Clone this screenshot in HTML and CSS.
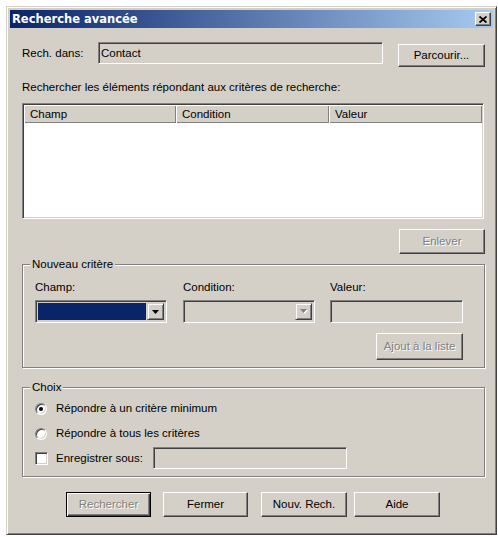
FILE: index.html
```html
<!DOCTYPE html>
<html lang="fr">
<head>
    <meta charset="UTF-8">
    <title>Recherche avancée</title>
    <link rel="stylesheet" href="styles.css">
</head>
<body>
    <div class="window">
        <div class="titlebar">
            <span class="title">Recherche avancée</span>
            <div class="close">
                <svg width="8" height="7" viewBox="0 0 8 7"><path d="M0.5 0.5L7.5 6.5M7.5 0.5L0.5 6.5" stroke="#000" stroke-width="1.8" fill="none"/></svg>
            </div>
        </div>

        <div class="content">
            <!-- Look in -->
            <div class="lookin">
                <span class="lookin-label">Rech. dans:</span>
                <div class="field lookin-field">Contact</div>
                <div class="btn browse">Parcourir...</div>
            </div>

            <div class="caption">Rechercher les éléments répondant aux critères de recherche:</div>

            <!-- Criteria list -->
            <div class="listview">
                <div class="lv-header">
                    <div class="lv-col col-field">Champ</div>
                    <div class="lv-col col-cond">Condition</div>
                    <div class="lv-col col-value">Valeur</div>
                </div>
            </div>

            <div class="remove-row">
                <div class="btn disabled remove">Enlever</div>
            </div>

            <!-- New criterion -->
            <div class="group group-new">
                <div class="group-title">Nouveau critère</div>
                <div class="criteria">
                    <div class="crit-col col1">
                        <div class="crit-label">Champ:</div>
                        <div class="field combo">
                            <div class="combo-value selected"></div>
                            <div class="combo-btn">
                                <svg width="7" height="4" viewBox="0 0 7 4"><polygon points="0,0 7,0 3.5,4" fill="#000"/></svg>
                            </div>
                        </div>
                    </div>
                    <div class="crit-col col2">
                        <div class="crit-label">Condition:</div>
                        <div class="field combo">
                            <div class="combo-value"></div>
                            <div class="combo-btn">
                                <svg width="8" height="5" viewBox="0 0 8 5"><polygon points="1,1 8,1 4.5,5" fill="#fff"/><polygon points="0,0 7,0 3.5,4" fill="#808080"/></svg>
                            </div>
                        </div>
                    </div>
                    <div class="crit-col col3">
                        <div class="crit-label">Valeur:</div>
                        <div class="field value-field"></div>
                    </div>
                </div>
                <div class="add-row">
                    <div class="btn disabled add">Ajout à la liste</div>
                </div>
            </div>

            <!-- Options -->
            <div class="group group-choice">
                <div class="group-title">Choix</div>
                <div class="option opt1">
                    <span class="radio checked"></span>
                    <span>Répondre à un critère minimum</span>
                </div>
                <div class="option opt2">
                    <span class="radio"></span>
                    <span>Répondre à tous les critères</span>
                </div>
                <div class="option opt3">
                    <span class="checkbox"></span>
                    <span class="save-label">Enregistrer sous:</span>
                    <div class="field save-field"></div>
                </div>
            </div>

            <!-- Dialog buttons -->
            <div class="actions">
                <div class="btn default disabled b-search">Rechercher</div>
                <div class="btn b-close">Fermer</div>
                <div class="btn b-new">Nouv. Rech.</div>
                <div class="btn b-help">Aide</div>
            </div>
        </div>
    </div>
</body>
</html>
```

FILE: styles.css
```css
* {
    box-sizing: border-box;
}

body {
    margin: 0;
    background: #fff;
    font-family: "Liberation Sans", Arial, sans-serif;
    font-size: 11.5px;
    line-height: 13px;
    color: #000;
}

/* Window frame */
.window {
    margin: 6px 0 0 6px;
    width: 491px;
    height: 529px;
    padding: 3px;
    background: #d4d0c8;
    border: 1px solid;
    border-color: #d4d0c8 #404040 #404040 #d4d0c8;
    box-shadow: inset 1px 1px #fff, inset -1px -1px #808080;
}

.titlebar {
    height: 18px;
    display: flex;
    align-items: center;
    justify-content: space-between;
    padding: 0 2px 0 2px;
    background: linear-gradient(to right, #0a246a, #a6caf0);
    color: #fff;
    font-family: "DejaVu Sans", sans-serif;
    font-weight: bold;
    font-size: 11.5px;
}

.close {
    width: 16px;
    height: 14px;
    display: flex;
    align-items: center;
    justify-content: center;
    background: #d4d0c8;
    border: 1px solid;
    border-color: #fff #404040 #404040 #fff;
    box-shadow: inset -1px -1px #808080;
}

.content {
    padding: 14px 8px 0 12px;
}

/* Shared 3D bits */
.field {
    height: 22px;
    background: #d4d0c8;
    border: 1px solid;
    border-color: #808080 #fff #fff #808080;
    box-shadow: inset 1px 1px #404040, inset -1px -1px #d4d0c8;
}

.btn {
    display: flex;
    align-items: center;
    justify-content: center;
    height: 23px;
    background: #d4d0c8;
    border: 1px solid;
    border-color: #fff #404040 #404040 #fff;
    box-shadow: inset -1px -1px #808080, inset 1px 1px #d4d0c8;
}

.btn.default {
    border-color: #000;
    box-shadow: inset 1px 1px #fff, inset -1px -1px #404040, inset -2px -2px #808080;
}

.btn.disabled {
    color: #808080;
    text-shadow: 1px 1px #fff;
}

/* Look in row */
.lookin {
    display: flex;
    align-items: flex-start;
    height: 25px;
}

.lookin-label {
    width: 76px;
    line-height: 22px;
}

.lookin-field {
    width: 285px;
    padding-left: 2px;
    line-height: 20px;
}

.browse {
    width: 87px;
    margin: 2px 0 0 15px;
}

.caption {
    margin-top: 14px;
}

/* List view */
.listview {
    margin-top: 9px;
    width: 462px;
    height: 116px;
    padding: 1px;
    background: #fff;
    border: 1px solid;
    border-color: #808080 #fff #fff #808080;
    box-shadow: inset 1px 1px #404040, inset -1px -1px #d4d0c8;
}

.lv-header {
    display: flex;
    height: 18px;
}

.lv-col {
    padding-left: 6px;
    line-height: 18px;
    background: #d4d0c8;
    box-shadow: inset 1px 1px #fff, inset -1px -1px #808080;
}

.col-field {
    width: 152px;
}

.col-cond {
    width: 153px;
}

.col-value {
    flex: 1;
}

.remove-row {
    display: flex;
    justify-content: flex-end;
    margin-top: 10px;
}

.remove {
    width: 86px;
    height: 25px;
}

/* Group boxes */
.group {
    border: 1px solid #808080;
    box-shadow: inset 1px 1px #fff, 1px 1px #fff;
    padding: 0 21px 7px 12px;
}

.group-title {
    display: table;
    margin: -7px 0 0 -5px;
    padding: 0 2px;
    background: #d4d0c8;
}

.group-new {
    margin-top: 10px;
}

.criteria {
    display: flex;
    margin-top: 10px;
}

.crit-col {
    display: flex;
    flex-direction: column;
}

.col1 {
    width: 132px;
}

.col2 {
    width: 132px;
    margin-left: 16px;
}

.col3 {
    width: 133px;
    margin-left: 15px;
}

.crit-label {
    height: 19px;
}

.combo {
    display: flex;
    height: 23px;
    padding: 2px;
}

.combo-value {
    flex: 1;
}

.combo-value.selected {
    background: #0a246a;
    margin-right: 1px;
}

.combo-btn {
    width: 17px;
    display: flex;
    align-items: center;
    justify-content: center;
    background: #d4d0c8;
    border: 1px solid;
    border-color: #d4d0c8 #404040 #404040 #d4d0c8;
    box-shadow: inset 1px 1px #fff, inset -1px -1px #808080;
}

.value-field {
    height: 23px;
}

.add-row {
    display: flex;
    justify-content: flex-end;
    margin-top: 10px;
}

.add {
    width: 87px;
    height: 27px;
}

.group-choice {
    margin-top: 19px;
}

.option {
    display: flex;
    align-items: center;
}

.opt1 {
    margin-top: 8px;
}

.opt2 {
    margin-top: 12px;
}

.opt3 {
    margin-top: 7px;
}

.radio {
    width: 12px;
    height: 12px;
    margin-right: 9px;
    display: flex;
    align-items: center;
    justify-content: center;
    border-radius: 50%;
    background: #fff;
    border: 1px solid;
    border-color: #808080 #fff #fff #808080;
    box-shadow: inset 1px 1px #404040, inset -1px -1px #d4d0c8;
}

.radio.checked::after {
    content: "";
    width: 4px;
    height: 4px;
    border-radius: 50%;
    background: #000;
}

.checkbox {
    width: 13px;
    height: 13px;
    margin-right: 8px;
    background: #fff;
    border: 1px solid;
    border-color: #808080 #fff #fff #808080;
    box-shadow: inset 1px 1px #404040, inset -1px -1px #d4d0c8;
}

.save-label {
    width: 97px;
}

.save-field {
    width: 194px;
}

/* Bottom buttons */
.actions {
    display: flex;
    margin-top: 15px;
}

.actions .btn {
    height: 25px;
}

.b-search {
    width: 85px;
    margin-left: 44px;
}

.b-close {
    width: 85px;
    margin-left: 12px;
}

.b-new {
    width: 86px;
    margin-left: 13px;
}

.b-help {
    width: 86px;
    margin-left: 7px;
}
```
